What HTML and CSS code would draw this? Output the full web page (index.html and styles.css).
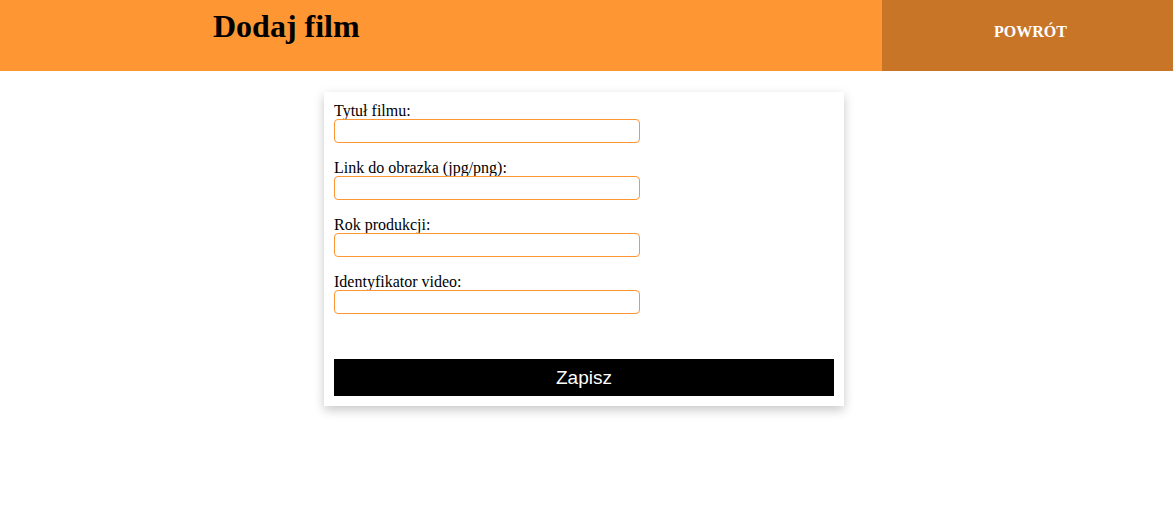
FILE: index.html
```html
<!DOCTYPE html>
<html lang="pl">
<head>
<meta charset="utf-8">
<title>Dodaj film</title>
<link rel="stylesheet" href="styles.css">
</head>
<body>
<header class="topbar">
  <h1 class="title">Dodaj film</h1>
  <a class="back" href="#">POWRÓT</a>
</header>
<main class="page">
  <form class="card">
    <div class="group">
      <label class="label" for="t">Tytuł filmu:</label>
      <input class="field" id="t" type="text">
    </div>
    <div class="group">
      <label class="label" for="l">Link do obrazka (jpg/png):</label>
      <input class="field" id="l" type="text">
    </div>
    <div class="group">
      <label class="label" for="r">Rok produkcji:</label>
      <input class="field" id="r" type="text">
    </div>
    <div class="group">
      <label class="label" for="v">Identyfikator video:</label>
      <input class="field" id="v" type="text">
    </div>
    <button class="save" type="button">Zapisz</button>
  </form>
</main>
</body>
</html>
```
FILE: styles.css
```css
* { box-sizing: border-box; }
html, body { margin: 0; padding: 0; background: #fff; }
body { font-family: "Liberation Serif", "Times New Roman", serif; font-size: 16px; color: #000; }

.topbar {
  display: flex;
  height: 71px;
  background: #ff9634;
}
.title {
  flex: 1;
  margin: 0;
  padding: 8px 0 0 213px;
  font-size: 32px;
  font-weight: bold;
  line-height: 37px;
}
.back {
  width: 291px;
  background: #c87528;
  color: #fff;
  text-decoration: none;
  font-weight: bold;
  font-size: 16px;
  display: flex;
  justify-content: center;
  padding: 23px 0 0 6px;
  line-height: 18px;
}

.page {
  display: flex;
  justify-content: center;
  padding: 21px 5px 20px 0;
}
.card {
  width: 520px;
  padding: 10px;
  background: #fff;
  box-shadow: 0 4px 10px rgba(0, 0, 0, 0.22);
  display: flex;
  flex-direction: column;
}
.group {
  display: flex;
  flex-direction: column;
  align-items: flex-start;
  margin-bottom: 16px;
}
.label { line-height: 17px; height: 17px; }
.field {
  width: 306px;
  height: 24px;
  border: 1px solid #ff9634;
  border-radius: 4px;
  padding: 0 4px;
  font-size: 13px;
  background: #fff;
  outline: none;
}
.save {
  margin-top: 29px;
  height: 37px;
  border: 0;
  background: #000;
  color: #fff;
  font-family: "Liberation Sans", Arial, sans-serif;
  font-size: 19px;
  cursor: pointer;
}
```
